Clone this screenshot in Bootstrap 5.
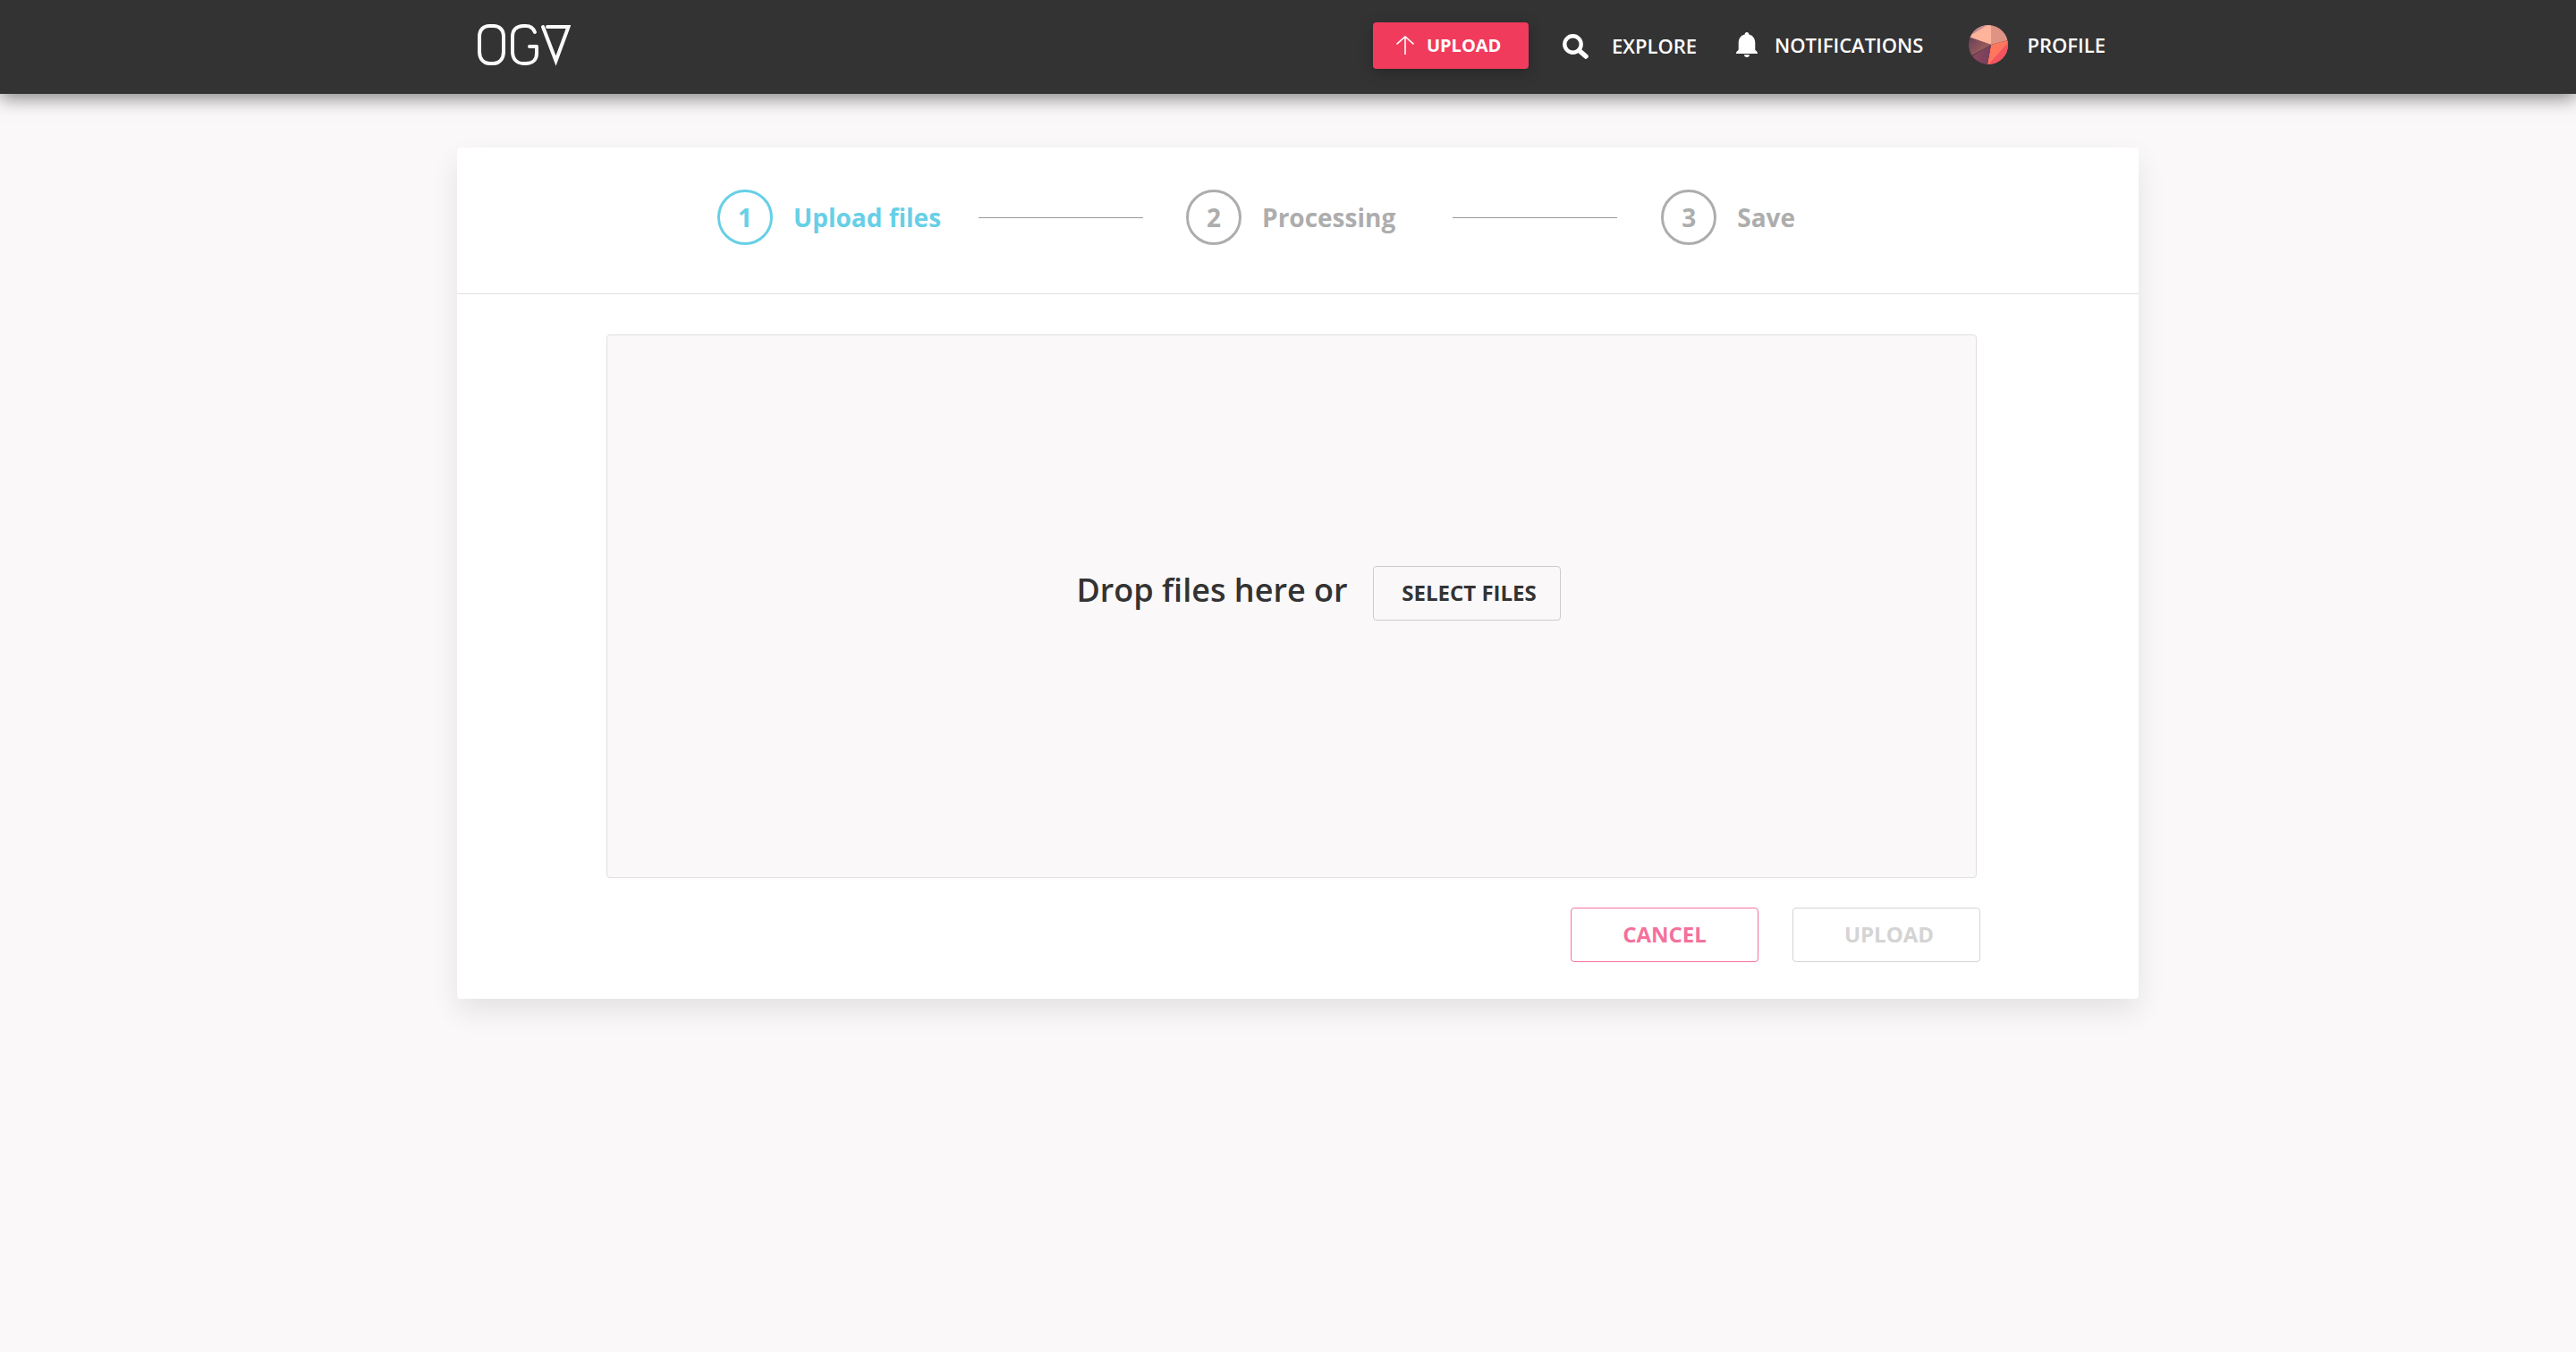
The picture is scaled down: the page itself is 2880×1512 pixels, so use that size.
<!DOCTYPE html>
<html lang="en">
<head>
<meta charset="utf-8">
<meta name="viewport" content="width=device-width, initial-scale=1">
<title>OGV – Upload</title>
<link rel="stylesheet" href="https://cdn.jsdelivr.net/npm/bootstrap@5.3.0/dist/css/bootstrap.min.css">
<style>
  body { font-family: "Open Sans", "Noto Sans", sans-serif; background: #faf8f9; color: #333; min-height: 100vh; }
  .shell { width: 100%; max-width: 1880px; }
  .offset-shell { padding-left: 22px; }
  .topbar { background: #333; min-height: 105px; padding-top: 0; padding-bottom: 3px; box-shadow: 0 4px 20px rgba(0,0,0,.5); }
  .topbar .shell { padding: 0 37px 0 23px; }
  .topbar a, .topbar a:hover { color: #fff; text-decoration: none; font-size: 22px; font-weight: 600; line-height: 30px; }
  .btn-send, .btn-send:hover { background: #f13b5c; color: #fff; border: 0; width: 174px; height: 52px; border-radius: 4px; font-size: 20px; font-weight: 700; box-shadow: 0 4px 16px rgba(0,0,0,.25); padding: 0 26px; gap: 14px; }
  .link-search { margin-left: 38px; gap: 25px; }
  .link-bell { margin-left: 44px; gap: 19px; }
  .link-profile { margin-left: 51px; gap: 21px; }
  .link-bell, .link-profile { padding-bottom: 2px; }
  .panel { background: #fff; border-radius: 4px; margin-top: 60px; box-shadow: 0 14px 32px rgba(0,0,0,.09); }
  .stepper { padding: 47px 24px 54px 291px; border-bottom: 1px solid #e0e0e0; list-style: none; margin: 0; }
  .stage { color: #adadad; font-size: 28px; font-weight: 700; line-height: 38px; gap: 23px; }
  .stage.current { color: #67cfe6; }
  .stage-num { width: 62px; height: 62px; border: 3px solid currentColor; border-radius: 50%; }
  .stage-line { width: 184px; height: 1px; background: #999; margin: 1px 48px 0 42px; }
  .stage-line.wide { margin-left: 64px; margin-right: 49px; }
  .panel-main { padding: 45px 177px 41px 167px; }
  .dropzone { background: #faf8f9; border: 1px solid #e0e0e0; border-radius: 4px; min-height: 608px; margin-right: 4px; padding: 0 0 29px 60px; gap: 28px; }
  .drop-text { font-size: 36px; font-weight: 600; line-height: 48px; }
  .btn-line { width: 210px; height: 61px; border-radius: 4px; font-size: 24px; font-weight: 700; line-height: 34px; padding: 0 0 2px; background: transparent; }
  .btn-pick { color: #333; border-color: #ccc; padding-left: 6px; }
  .btn-stop { color: #f4719c; border-color: #f4719c; }
  .btn-line:disabled { color: #d4d4d4; border-color: #d4d4d4; opacity: 1; padding-left: 6px; }
  .actions { margin-top: 33px; gap: 38px; }
</style>
<script src="https://cdn.jsdelivr.net/npm/bootstrap@5.3.0/dist/js/bootstrap.bundle.min.js"></script>
</head>
<body>
<header class="topbar navbar">
  <div class="offset-shell w-100">
    <nav class="shell mx-auto d-flex align-items-center">
      <a href="#" class="d-flex me-auto" aria-label="OGV">
        <svg width="104" height="48" viewBox="0 0 104 48" fill="none" stroke="#fafafa" stroke-width="4" stroke-linecap="round" stroke-linejoin="round" aria-hidden="true">
          <path d="M2 14C2 6 7 2 13 2h5c6 0 11 4 11 12v17c0 8-5 13-11 13h-5C7 44 2 39 2 31Z"/>
          <path d="M64 9c-2-5-6-7-10-7h-3c-7 0-12 4-12 12v17c0 8 5 13 12 13h3c7 0 12-4 12-11V25h-8"/>
          <path stroke-linejoin="miter" d="M73 3l14.500 38L101.500 3H78"/>
        </svg>
      </a>
      <button type="button" class="btn btn-send d-flex align-items-center">
        <svg width="20" height="22" viewBox="0 0 20 22" fill="none" stroke="currentColor" stroke-width="1.600" aria-hidden="true"><path d="M10 21V1M.5 9.500L10 1l9.500 8.500"/></svg>
        UPLOAD
      </button>
      <a href="#" class="link-search d-flex align-items-center">
        <svg width="30" height="30" viewBox="0 0 30 30" fill="none" stroke="currentColor" aria-hidden="true"><circle cx="11.500" cy="13.500" r="9.200" stroke-width="4.400"/><path d="M18.500 20.500l7.500 6.500" stroke-width="5.500" stroke-linecap="round"/></svg>
        EXPLORE
      </a>
      <a href="#" class="link-bell d-flex align-items-center">
        <svg width="24" height="28" viewBox="0 0 24 28" fill="currentColor" aria-hidden="true"><path d="M12 0c1.500 0 2.300 1 2.300 2.600C19 3.800 21.300 7.500 21.300 12v7.500c0 1.200 2.700 1.600 2.700 4.500H0c0-2.900 2.700-3.300 2.700-4.500V12c0-4.500 2.300-8.200 7-9.400C9.700 1 10.500 0 12 0ZM9 25.200h6c0 1.800-1.300 2.800-3 2.800s-3-1-3-2.800Z"/></svg>
        NOTIFICATIONS
      </a>
      <a href="#" class="link-profile d-flex align-items-center">
        <svg width="44" height="44" viewBox="0 0 44 44" aria-hidden="true">
          <defs>
            <clipPath id="disc"><circle cx="22" cy="22" r="22"/></clipPath>
            <linearGradient id="dusk" x1="0" x2="1" y1="0" y2="1"><stop stop-color="#673d59"/><stop offset="1" stop-color="#b56e5d"/></linearGradient>
            <linearGradient id="plum" x1="1" x2="0"><stop stop-color="#71405c"/><stop offset="1" stop-color="#96465e"/></linearGradient>
          </defs>
          <g clip-path="url(#disc)">
            <path fill="#ffb39b" d="M25 22V0H0v14Z"/>
            <path fill="#c58b90" d="M0 13V0h21Z"/>
            <path fill="#de9384" d="M25 22V0h19v17Z"/>
            <path fill="#ff765f" d="M25 22l19-5v27H21Z"/>
            <path fill="#f55360" d="M44 20v24H22Z"/>
            <path fill="url(#plum)" d="M25 22l-4 22H0v-7Z"/>
            <path fill="url(#dusk)" d="M25 22L0 13v23Z"/>
          </g>
        </svg>
        PROFILE
      </a>
    </nav>
  </div>
</header>

<main class="offset-shell">
  <section class="panel shell mx-auto">
    <ol class="stepper d-flex align-items-center">
      <li class="stage current d-flex align-items-center" aria-current="step"><span class="stage-num d-flex align-items-center justify-content-center">1</span>Upload files</li>
      <li class="stage-line" aria-hidden="true"></li>
      <li class="stage d-flex align-items-center"><span class="stage-num d-flex align-items-center justify-content-center">2</span>Processing</li>
      <li class="stage-line wide" aria-hidden="true"></li>
      <li class="stage d-flex align-items-center"><span class="stage-num d-flex align-items-center justify-content-center">3</span>Save</li>
    </ol>
    <div class="panel-main">
      <div class="dropzone d-flex align-items-center justify-content-center">
        <span class="drop-text pb-2">Drop files here or</span>
        <button type="button" class="btn btn-line btn-pick">SELECT FILES</button>
      </div>
      <div class="actions d-flex justify-content-end">
        <button type="button" class="btn btn-line btn-stop">CANCEL</button>
        <button type="button" class="btn btn-line" disabled>UPLOAD</button>
      </div>
    </div>
  </section>
</main>
</body>
</html>
